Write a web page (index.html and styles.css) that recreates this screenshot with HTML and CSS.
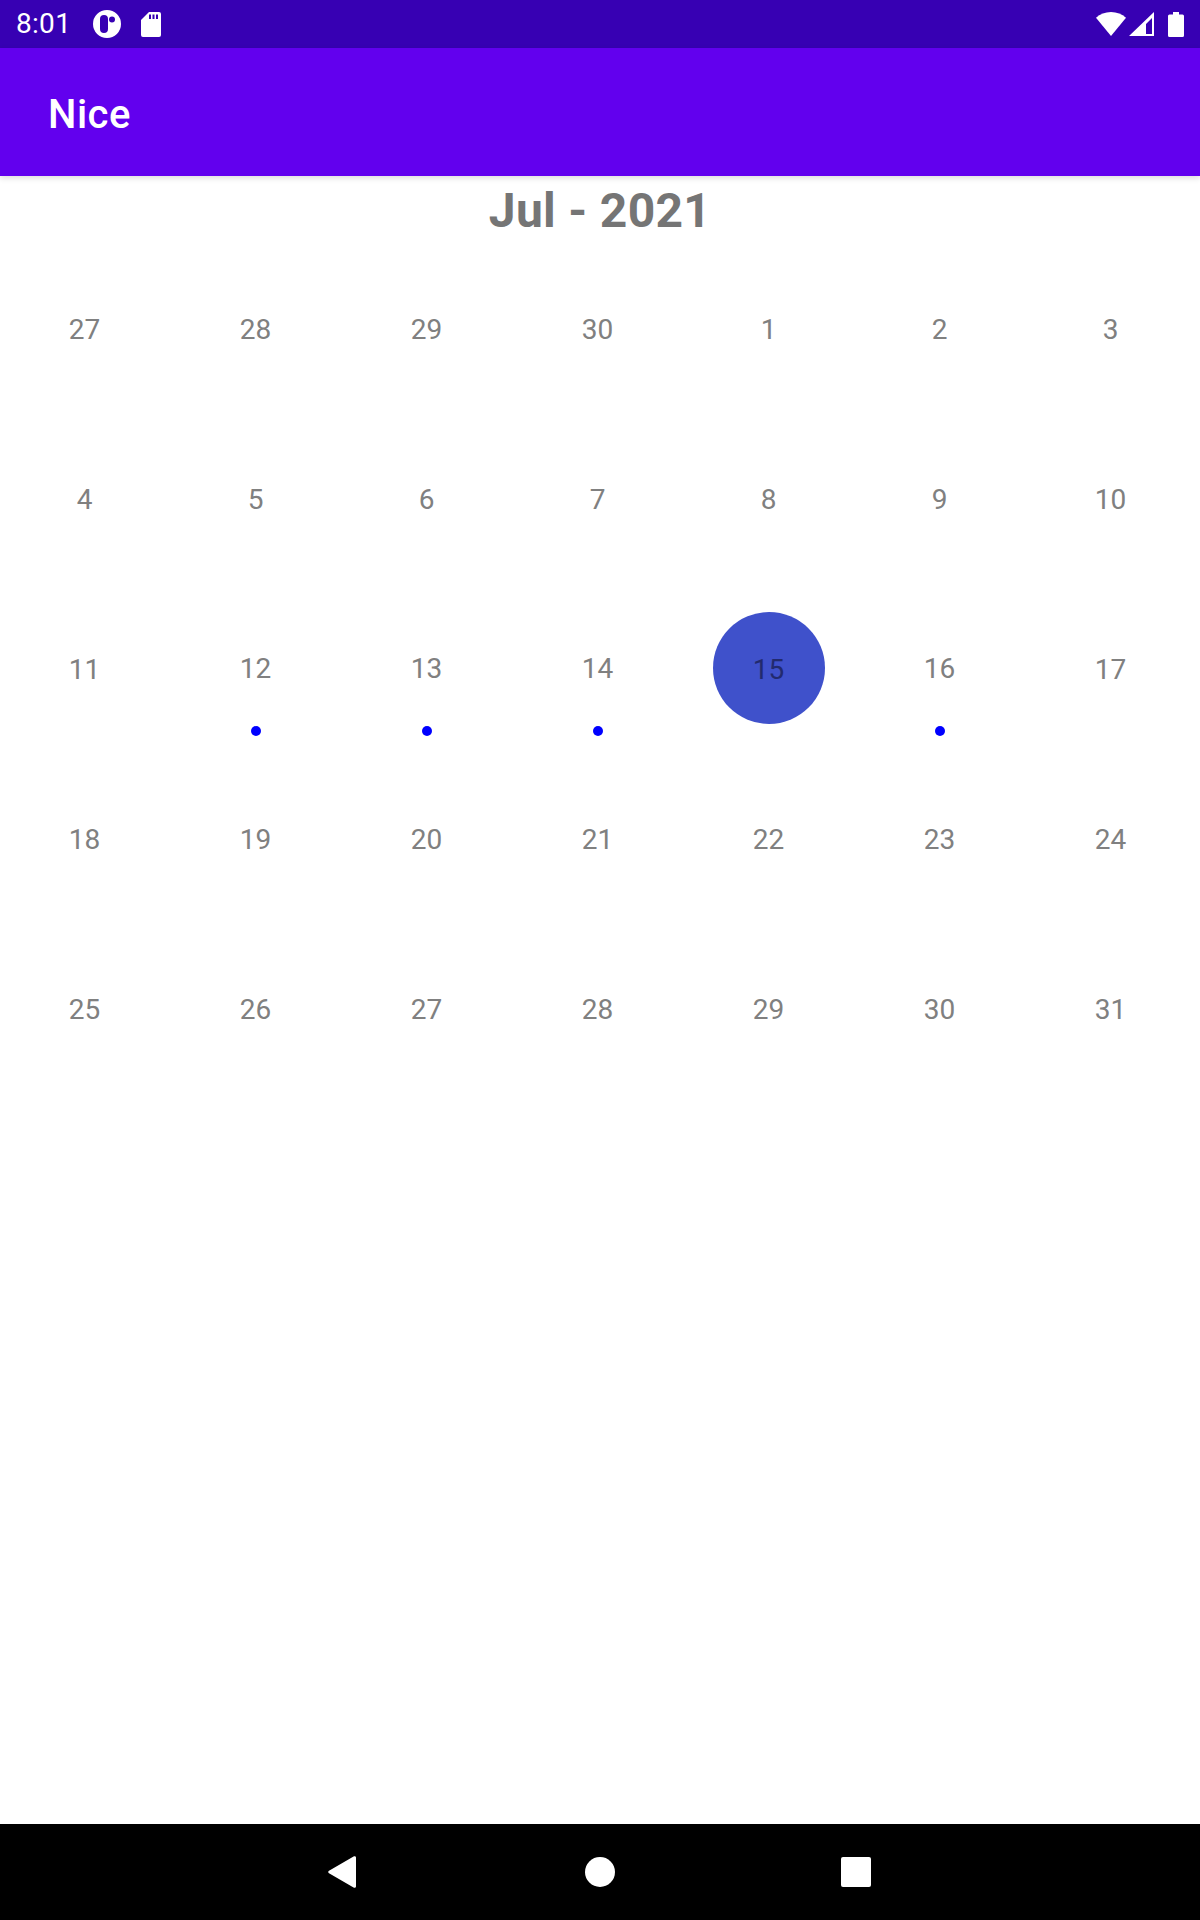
FILE: index.html
```html
<!DOCTYPE html>
<html lang="en">
<head>
  <meta charset="UTF-8">
  <meta name="viewport" content="width=device-width, initial-scale=1.0">
  <title>Nice</title>
  <link rel="stylesheet" href="styles.css">
</head>
<body>
  <div class="screen">
    <div class="status-bar">
      <span class="clock">8:01</span>
      <svg class="icon-app" viewBox="0 0 28 28">
        <path fill="#fff" fill-rule="evenodd" d="M14 0a14 14 0 1 1 0 28a14 14 0 0 1 0-28zM11 5a4 4 0 0 0-4 4v10a4 4 0 0 0 8 0v-10a4 4 0 0 0-4-4zM19 6.500a3 3 0 1 0 0 6a3 3 0 0 0 0-6z"/>
      </svg>
      <svg class="icon-sd" viewBox="0 0 20 25">
        <path fill="#fff" fill-rule="evenodd" d="M8 0h10a2 2 0 0 1 2 2v21a2 2 0 0 1-2 2H2a2 2 0 0 1-2-2V8zM8 2.500v4.500h2v-4.500zM11.500 2.500v4.500h2v-4.500zM15 2.500v4.500h2v-4.500z"/>
      </svg>
      <div class="status-right">
        <svg class="icon-wifi" viewBox="0 0 30 24">
          <path fill="#fff" d="M15 0c5.800 0 11 2.200 15 5.800L15 24L0 5.800C4 2.200 9.200 0 15 0z"/>
        </svg>
        <svg class="icon-signal" viewBox="0 0 25 24">
          <path fill="#fff" fill-rule="evenodd" d="M25 0v24H0zM23 6l-6 6v10h6z"/>
        </svg>
        <svg class="icon-battery" viewBox="0 0 16 25">
          <path fill="#fff" d="M5 0h6v2.500h3.500a1.500 1.500 0 0 1 1.500 1.500v19.500a1.500 1.500 0 0 1-1.500 1.500h-13a1.500 1.500 0 0 1-1.500-1.500v-19.500a1.500 1.500 0 0 1 1.500-1.500h3.500z"/>
        </svg>
      </div>
    </div>

    <header class="app-bar">Nice</header>

    <main class="content">
      <h1 class="month-title">Jul - 2021</h1>
      <div class="calendar">
        <div class="day">27</div>
        <div class="day">28</div>
        <div class="day">29</div>
        <div class="day">30</div>
        <div class="day">1</div>
        <div class="day">2</div>
        <div class="day">3</div>

        <div class="day">4</div>
        <div class="day">5</div>
        <div class="day">6</div>
        <div class="day">7</div>
        <div class="day">8</div>
        <div class="day">9</div>
        <div class="day">10</div>

        <div class="day">11</div>
        <div class="day has-event">12</div>
        <div class="day has-event">13</div>
        <div class="day has-event">14</div>
        <div class="day selected"><span class="day-number">15</span></div>
        <div class="day has-event">16</div>
        <div class="day">17</div>

        <div class="day">18</div>
        <div class="day">19</div>
        <div class="day">20</div>
        <div class="day">21</div>
        <div class="day">22</div>
        <div class="day">23</div>
        <div class="day">24</div>

        <div class="day">25</div>
        <div class="day">26</div>
        <div class="day">27</div>
        <div class="day">28</div>
        <div class="day">29</div>
        <div class="day">30</div>
        <div class="day">31</div>
      </div>
    </main>

    <nav class="nav-bar">
      <svg class="nav-back" viewBox="0 0 28 32">
        <path fill="#fff" d="M26 0.300a1.500 1.500 0 0 1 2 1.200v29a1.500 1.500 0 0 1-2 1.200L1 17.300a1.500 1.500 0 0 1 0-2.600z"/>
      </svg>
      <span class="nav-home"></span>
      <span class="nav-recent"></span>
    </nav>
  </div>
</body>
</html>
```

FILE: styles.css
```css
html, body {
  margin: 0;
  padding: 0;
}
body {
  font-family: Roboto, "Liberation Sans", sans-serif;
  background-color: #ffffff;
}
.screen {
  display: flex;
  flex-direction: column;
  height: 1920px;
}
.status-bar {
  display: flex;
  align-items: center;
  flex: 0 0 48px;
  padding: 0 16px;
  box-sizing: border-box;
  background-color: #3700b3;
  color: #ffffff;
}
.clock {
  font-size: 28px;
  letter-spacing: 0.3px;
  line-height: 48px;
  width: 77px;
}
.icon-app {
  width: 28px;
  height: 28px;
  margin-right: 20px;
}
.icon-sd {
  width: 20px;
  height: 25px;
}
.status-right {
  display: flex;
  align-items: center;
  margin-left: auto;
}
.icon-wifi {
  width: 30px;
  height: 24px;
  margin-right: 3px;
}
.icon-signal {
  width: 25px;
  height: 24px;
  margin-right: 14px;
}
.icon-battery {
  width: 16px;
  height: 25px;
}
.app-bar {
  position: relative;
  z-index: 1;
  flex: 0 0 128px;
  box-sizing: border-box;
  padding: 6px 0 0 48px;
  font-size: 40px;
  font-weight: 500;
  letter-spacing: 0.5px;
  line-height: 122px;
  color: #ffffff;
  background-color: #6200ee;
  box-shadow: 0 2px 6px rgba(0, 0, 0, 0.14);
}
.content {
  flex: 1;
}
.month-title {
  margin: 0;
  padding-top: 7px;
  height: 61px;
  font-size: 48px;
  font-weight: 700;
  letter-spacing: 0.3px;
  line-height: 56px;
  text-align: center;
  color: #757575;
}
.calendar {
  display: grid;
  grid-template-columns: repeat(7, 171px);
  grid-auto-rows: 170px;
  margin-left: -1px;
}
.day {
  position: relative;
  display: flex;
  align-items: center;
  justify-content: center;
  font-size: 28px;
  color: #808080;
}
.has-event {
  padding-bottom: 2px;
  box-sizing: border-box;
}
.has-event::after {
  content: "";
  position: absolute;
  top: 142px;
  left: 50%;
  width: 10px;
  height: 10px;
  margin-left: -5px;
  border-radius: 50%;
  background-color: #0000ff;
}
.selected {
  padding-bottom: 2px;
  box-sizing: border-box;
}
.selected .day-number {
  display: flex;
  align-items: center;
  justify-content: center;
  box-sizing: border-box;
  width: 112px;
  height: 112px;
  padding-top: 2px;
  border-radius: 50%;
  background-color: #3f51cb;
  color: #222a6e;
}
.nav-bar {
  position: relative;
  flex: 0 0 96px;
  background-color: #000000;
}
.nav-back {
  position: absolute;
  left: 328px;
  top: 32px;
  width: 28px;
  height: 32px;
}
.nav-home {
  position: absolute;
  left: 585px;
  top: 33px;
  width: 30px;
  height: 30px;
  border-radius: 50%;
  background-color: #ffffff;
}
.nav-recent {
  position: absolute;
  left: 841px;
  top: 33px;
  width: 30px;
  height: 30px;
  border-radius: 2px;
  background-color: #ffffff;
}
```
